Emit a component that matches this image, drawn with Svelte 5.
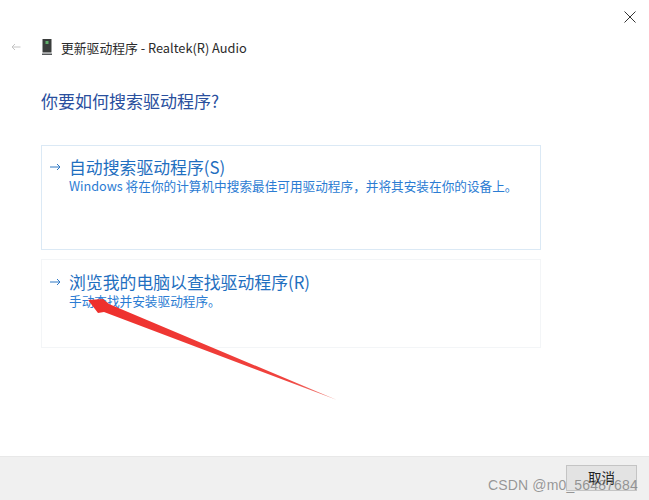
<script>
  const options = [
    {
      title: "自动搜索驱动程序(S)",
      desc: "Windows 将在你的计算机中搜索最佳可用驱动程序，并将其安装在你的设备上。",
      cls: "tall"
    },
    {
      title: "浏览我的电脑以查找驱动程序(R)",
      desc: "手动查找并安装驱动程序。",
      cls: "short"
    }
  ];
</script>

<div class="dialog">
  <div class="close-row">
    <svg class="close" width="12" height="12" viewBox="0 0 12 12">
      <path d="M.5.5l11 11M11.5.5l-11 11" stroke="#333" stroke-width="1" fill="none" />
    </svg>
  </div>

  <div class="title-row">
    <svg class="back" width="10" height="8" viewBox="0 0 10 8">
      <path d="M9.5 4H1M4 1L1 4l3 3" stroke="#c4c4c4" stroke-width="1" fill="none" />
    </svg>
    <svg class="device" width="12" height="16" viewBox="0 0 12 16">
      <rect x="1.5" y="0" width="9" height="13.5" fill="#3a3d3c" />
      <rect x="4.5" y="2" width="3" height="3" fill="#5fae6a" />
      <rect x="1" y="14.5" width="10" height="1.5" fill="#55585a" />
    </svg>
    <span class="title">更新驱动程序 - Realtek(R) Audio</span>
  </div>

  <h1>你要如何搜索驱动程序?</h1>

  <div class="options">
    {#each options as opt}
      <div class="option {opt.cls}">
        <svg class="go" width="11" height="8" viewBox="0 0 11 8">
          <path d="M0 4h10M7 1l3 3-3 3" stroke="#2f78c4" stroke-width="1" fill="none" />
        </svg>
        <div class="text">
          <div class="opt-title">{opt.title}</div>
          <div class="opt-desc">{opt.desc}</div>
        </div>
      </div>
    {/each}
  </div>

  <div class="footer">
    <button>取消</button>
  </div>

  <!-- annotation and watermark lie over the dialog -->
  <svg class="annotation" width="649" height="500" viewBox="0 0 649 500">
    <defs>
      <linearGradient id="tail" gradientUnits="userSpaceOnUse" x1="90" y1="303" x2="337" y2="400">
        <stop offset="0" stop-color="#ee2f2c" />
        <stop offset="0.8" stop-color="#f0443f" />
        <stop offset="1" stop-color="#f08a82" />
      </linearGradient>
    </defs>
    <polygon points="88,300 103,299 109,304 337,400 104,312 98,313" fill="url(#tail)" />
  </svg>
  <span class="watermark">CSDN @m0_56487684</span>
</div>

<style>
  :global(body) {
    margin: 0;
    background: #fff;
  }

  .dialog {
    position: relative;
    width: 649px;
    height: 500px;
    overflow: hidden;
    display: flex;
    flex-direction: column;
    background: #fff;
    font-family: "Noto Sans CJK SC", "Open Sans", sans-serif;
  }

  .close-row {
    display: flex;
    justify-content: flex-end;
    padding: 11px 13px 0 0;
    height: 13px;
  }

  .title-row {
    display: flex;
    align-items: center;
    height: 18px;
    margin-top: 14px;
    padding-left: 11px;
  }

  .back {
    margin-right: 20px;
  }

  .device {
    margin-right: 8px;
  }

  .title {
    font-size: 12.8px;
    color: #2b2b2b;
    white-space: nowrap;
  }

  h1 {
    margin: 33px 0 0 41px;
    height: 24px;
    line-height: 24px;
    font-size: 17px;
    font-weight: 400;
    color: #2a4f9e;
  }

  .options {
    display: flex;
    flex-direction: column;
    gap: 9px;
    margin: 32px 108px 0 41px;
  }

  .option {
    display: flex;
    align-items: flex-start;
    box-sizing: border-box;
    padding: 10px 0 0 8px;
  }

  .tall {
    height: 105px;
    border: 1px solid #dbe9f5;
  }

  .short {
    height: 89px;
    border: 1px solid #f3f5f7;
    padding-top: 11px;
  }

  .go {
    margin: 7px 9px 0 0;
    flex: none;
  }

  .text {
    margin-left: -1px;
  }

  .opt-title {
    font-size: 16.85px;
    line-height: 21px;
    color: #1f6fc0;
    white-space: nowrap;
  }

  .opt-desc {
    font-size: 12.65px;
    line-height: 17px;
    color: #2b7cd3;
    white-space: nowrap;
  }

  .footer {
    margin-top: auto;
    height: 44px;
    box-sizing: border-box;
    background: #f0f0f0;
    border-top: 1px solid #e8e8e8;
    display: flex;
    justify-content: flex-end;
    align-items: flex-start;
    padding: 8px 12px 0 0;
  }

  button {
    width: 71px;
    height: 26px;
    box-sizing: border-box;
    border: 1px solid #c4c4c4;
    background: #e3e3e3;
    color: #222;
    font-family: inherit;
    font-size: 13.5px;
    line-height: 20px;
    padding: 0 0 2px;
  }

  .annotation {
    position: absolute;
    left: 0;
    top: 0;
    pointer-events: none;
  }

  .watermark {
    position: absolute;
    left: 488px;
    top: 477px;
    font-family: "Liberation Sans", sans-serif;
    font-size: 14px;
    letter-spacing: 0.15px;
    color: rgba(120, 120, 120, 0.75);
    white-space: nowrap;
  }
</style>
